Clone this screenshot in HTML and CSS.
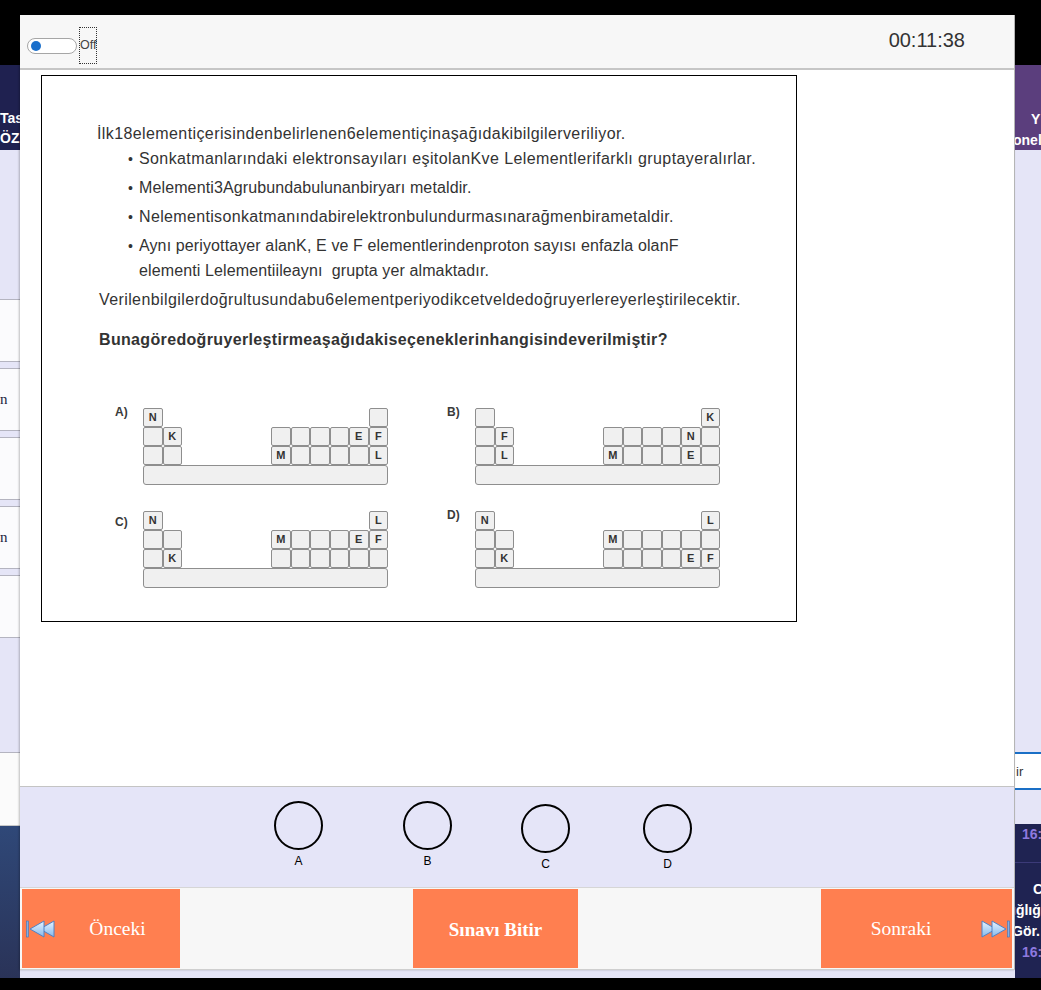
FILE: index.html
```html
<!DOCTYPE html>
<html lang="tr">
<head>
<meta charset="utf-8">
<title>Sınav</title>
<link rel="stylesheet" href="styles.css">
</head>
<body>
<div class="backdrop">
  <div class="topband"></div>
  <div class="under">
    <aside class="side-left">
      <div class="sl-head"><span>Tas</span><span>ÖZ</span></div>
      <div class="sl-lav"></div>
      <div class="sl-box"></div>
      <div class="sl-box"><span>n</span></div>
      <div class="sl-box"></div>
      <div class="sl-box"><span>n</span></div>
      <div class="sl-box"></div>
      <div class="sl-lav2"></div>
      <div class="sl-white"></div>
      <div class="sl-navy"></div>
    </aside>
    <div class="under-main"></div>
    <aside class="side-right">
      <div class="sr-head"><span class="sr-y">Y</span><span class="sr-onel">onel</span></div>
      <div class="sr-lav"></div>
      <div class="sr-input"><span>ir</span></div>
      <div class="sr-lav2"></div>
      <div class="sr-navy">
        <span class="sr-time">16:</span>
        <div class="sr-sep"></div>
        <span class="sr-c">C</span>
        <span class="sr-t">ığlığ</span>
        <span class="sr-t">Gör.</span>
        <span class="sr-time">16:</span>
      </div>
    </aside>
  </div>
  <div class="bottomband"></div>
</div>

<div class="modal">
  <header class="mhead">
    <div class="toggle-wrap">
      <span class="toggle"><span class="knob"></span></span>
      <span class="toggle-label">Off</span>
    </div>
    <div class="timer">00:11:38</div>
  </header>

  <main class="mbody">
    <section class="qbox">
      <p class="intro">İlk18elementiçerisindenbelirlenen6elementiçinaşağıdakibilgilerveriliyor.</p>
      <ul class="facts">
        <li>Sonkatmanlarındaki elektronsayıları eşitolanKve Lelementlerifarklı gruptayeralırlar.</li>
        <li class="tight">Melementi3Agrubundabulunanbiryarı metaldir.</li>
        <li class="mid">Nelementisonkatmanındabirelektronbulundurmasınarağmenbirametaldir.</li>
        <li class="tight">Aynı periyottayer alanK, E ve F elementlerindenproton sayısı enfazla olanF<br>elementi Lelementiileaynı&nbsp; grupta yer almaktadır.</li>
      </ul>
      <p class="given">Verilenbilgilerdoğrultusundabu6elementperiyodikcetveldedoğruyerlereyerleştirilecektir.</p>
      <p class="ask">Bunagöredoğruyerleştirmeaşağıdakiseçeneklerinhangisindeverilmiştir?</p>

      <div class="choices">
        <div class="choice">
          <span class="clabel">A)</span>
          <div class="ptable">
            <span class="cell">N</span><span class="void wide"></span><span class="cell"></span>
            <span class="cell"></span><span class="cell">K</span><span class="void"></span><span class="cell"></span><span class="cell"></span><span class="cell"></span><span class="cell"></span><span class="cell">E</span><span class="cell">F</span>
            <span class="cell"></span><span class="cell"></span><span class="void"></span><span class="cell">M</span><span class="cell"></span><span class="cell"></span><span class="cell"></span><span class="cell"></span><span class="cell">L</span>
            <span class="base"></span>
          </div>
        </div>
        <div class="choice">
          <span class="clabel">B)</span>
          <div class="ptable">
            <span class="cell"></span><span class="void wide"></span><span class="cell">K</span>
            <span class="cell"></span><span class="cell">F</span><span class="void"></span><span class="cell"></span><span class="cell"></span><span class="cell"></span><span class="cell"></span><span class="cell">N</span><span class="cell"></span>
            <span class="cell"></span><span class="cell">L</span><span class="void"></span><span class="cell">M</span><span class="cell"></span><span class="cell"></span><span class="cell"></span><span class="cell">E</span><span class="cell"></span>
            <span class="base"></span>
          </div>
        </div>
        <div class="choice">
          <span class="clabel low">C)</span>
          <div class="ptable">
            <span class="cell">N</span><span class="void wide"></span><span class="cell">L</span>
            <span class="cell"></span><span class="cell"></span><span class="void"></span><span class="cell">M</span><span class="cell"></span><span class="cell"></span><span class="cell"></span><span class="cell">E</span><span class="cell">F</span>
            <span class="cell"></span><span class="cell">K</span><span class="void"></span><span class="cell"></span><span class="cell"></span><span class="cell"></span><span class="cell"></span><span class="cell"></span><span class="cell"></span>
            <span class="base"></span>
          </div>
        </div>
        <div class="choice">
          <span class="clabel">D)</span>
          <div class="ptable">
            <span class="cell">N</span><span class="void wide"></span><span class="cell">L</span>
            <span class="cell"></span><span class="cell"></span><span class="void"></span><span class="cell">M</span><span class="cell"></span><span class="cell"></span><span class="cell"></span><span class="cell"></span><span class="cell"></span>
            <span class="cell"></span><span class="cell">K</span><span class="void"></span><span class="cell"></span><span class="cell"></span><span class="cell"></span><span class="cell"></span><span class="cell">E</span><span class="cell">F</span>
            <span class="base"></span>
          </div>
        </div>
      </div>
    </section>
  </main>

  <div class="answers">
    <div class="opt opt-a"><span class="circle"></span><span class="olabel">A</span></div>
    <div class="opt opt-b"><span class="circle"></span><span class="olabel">B</span></div>
    <div class="opt opt-c"><span class="circle"></span><span class="olabel">C</span></div>
    <div class="opt opt-d"><span class="circle"></span><span class="olabel">D</span></div>
  </div>

  <nav class="navbar">
    <button class="nbtn prev">
      <svg class="nicon" width="29" height="18" viewBox="0 0 29 18" aria-hidden="true">
        <defs>
          <linearGradient id="gp" x1="0" y1="0" x2="0" y2="1">
            <stop offset="0" stop-color="#e6f3ff"/>
            <stop offset="1" stop-color="#86b9ec"/>
          </linearGradient>
        </defs>
        <polygon points="14,9 28,1 28,17" fill="url(#gp)" stroke="#4f82c6" stroke-width="1"/>
        <polygon points="4,9 18,1 18,17" fill="url(#gp)" stroke="#4f82c6" stroke-width="1"/>
        <rect x="0.5" y="1" width="2" height="16" fill="#7fb0e6" stroke="#3f72b8" stroke-width="0.6"/>
      </svg>
      <span class="ntext">Önceki</span>
    </button>
    <span class="nspace"></span>
    <button class="nbtn finish"><span class="ntext">Sınavı Bitir</span></button>
    <span class="nspace"></span>
    <button class="nbtn next">
      <span class="ntext">Sonraki</span>
      <svg class="nicon" width="29" height="18" viewBox="0 0 29 18" aria-hidden="true">
        <defs>
          <linearGradient id="gn" x1="0" y1="0" x2="0" y2="1">
            <stop offset="0" stop-color="#e6f3ff"/>
            <stop offset="1" stop-color="#86b9ec"/>
          </linearGradient>
        </defs>
        <polygon points="15,9 1,1 1,17" fill="url(#gn)" stroke="#4f82c6" stroke-width="1"/>
        <polygon points="25,9 11,1 11,17" fill="url(#gn)" stroke="#4f82c6" stroke-width="1"/>
        <rect x="26.5" y="1" width="2" height="16" fill="#7fb0e6" stroke="#3f72b8" stroke-width="0.6"/>
      </svg>
    </button>
  </nav>
</div>
</body>
</html>
```

FILE: styles.css
```css
* { box-sizing: border-box; }
html, body { margin: 0; padding: 0; }
body {
  width: 1041px;
  height: 990px;
  overflow: hidden;
  position: relative;
  background: #000;
  font-family: "Liberation Sans", Arial, sans-serif;
}

/* ---------- underlying page ---------- */
.backdrop { display: flex; flex-direction: column; height: 990px; }
.topband { height: 65px; flex: none; background: #000; }
.under { display: flex; height: 913px; flex: none; }
.bottomband { flex: 1; background: #000; }
.under-main { flex: 1; background: #e5e5f7; }

.side-left { width: 20px; display: flex; flex-direction: column; overflow: hidden; background: #e5e5f7; }
.sl-head {
  height: 85px; flex: none; background: #1f2150;
  display: flex; flex-direction: column; padding-top: 43px;
  color: #fff; font-weight: bold; font-size: 14px; line-height: 20px; white-space: nowrap;
}
.sl-lav { height: 149px; flex: none; }
.sl-box {
  height: 63px; flex: none; margin-bottom: 6px;
  background: #fbfbfd; border-top: 1px solid #b4b4c0; border-bottom: 1px solid #b4b4c0;
  display: flex; align-items: center;
  font-family: "Liberation Serif", serif; font-size: 15px; color: #1c2440;
}
.sl-lav2 { height: 108px; flex: none; }
.sl-white { height: 74px; flex: none; background: #fbfbfb; border-top: 1px solid #b4b4c0; border-bottom: 1px solid #c8c8c8; }
.sl-navy { flex: 1; background: linear-gradient(#2f4878, #2a3358); }

.side-right { width: 26px; display: flex; flex-direction: column; overflow: hidden; background: #e5e5f7; }
.sr-head {
  height: 85px; flex: none; background: #5b3e7d;
  display: flex; flex-direction: column; padding-top: 44px;
  color: #fff; font-weight: bold; font-size: 14px; line-height: 21px; white-space: nowrap;
}
.sr-y { padding-left: 16px; }
.sr-onel { margin-left: -2px; }
.sr-lav { height: 602px; flex: none; }
.sr-input {
  height: 38px; flex: none; background: #fff;
  border-top: 2px solid #1a6fc6; border-bottom: 2px solid #1a6fc6;
  display: flex; align-items: center; font-size: 13px; color: #333; padding-left: 1px;
}
.sr-lav2 { height: 34px; flex: none; }
.sr-navy {
  flex: 1; background: #1f2352;
  display: flex; flex-direction: column;
  color: #fff; font-weight: bold; font-size: 14px; line-height: 21px; white-space: nowrap;
}
.sr-time { color: #8e79df; padding-left: 7px; }
.sr-sep { height: 1px; background: #3b3a78; margin: 17px 0 16px; }
.sr-c { padding-left: 18px; }
.sr-t { margin-left: -3px; }

/* ---------- modal ---------- */
.modal {
  position: absolute;
  left: 20px; top: 15px;
  width: 995px; height: 955px;
  display: flex; flex-direction: column;
  background: #fff;
  border-right: 1px solid #b5b5b5;
  border-bottom: 1px solid #cfcfcf;
  box-shadow: -1px 0 2px rgba(0, 0, 0, 0.25);
}

.mhead {
  height: 55px; flex: none;
  background: #f7f7f7;
  border-bottom: 2px solid #c6c6c6;
  display: flex; align-items: center; justify-content: space-between;
  padding: 0 49px 0 7px;
}
.toggle-wrap { display: flex; align-items: center; gap: 2px; margin-top: 8px; }
.toggle {
  width: 50px; height: 16px;
  border: 1px solid #a6a6a6; border-radius: 8px;
  background: #fff;
  display: flex; align-items: center; padding-left: 3px;
}
.knob { width: 10px; height: 10px; border-radius: 50%; background: #1a6fcb; }
.toggle-label {
  height: 37px; line-height: 35px;
  border: 1px dotted #333;
  padding: 0;
  font-size: 12.5px; color: #444;
}
.timer { font-size: 20px; color: #333; margin-top: -2px; }

.mbody { flex: 1; background: #fff; padding: 5px 0 0 21px; }

.qbox {
  width: 756px; height: 547px;
  border: 1px solid #000;
  padding: 45px 0 0 55px;
  color: #333;
  font-size: 16px;
  line-height: 25px;
  letter-spacing: 0.4px;
  white-space: nowrap;
}
.qbox p { margin: 0; }
.facts { list-style: none; margin: 0; padding: 0 0 0 42px; }
.facts li + li { margin-top: 4px; }
.facts li.tight { letter-spacing: 0.12px; }
.facts li.mid { letter-spacing: 0.34px; }
.facts li::before {
  content: "•";
  display: inline-block;
  width: 11px; margin-left: -11px;
  letter-spacing: 0;
  font-size: 14px;
  line-height: 1;
}
.given { margin-top: 4px !important; padding-left: 2px; }
.ask { margin-top: 15px !important; padding-left: 2px; font-weight: bold; letter-spacing: 0.34px; }

.choices {
  margin: 53px 0 0 18px;
  display: grid;
  grid-template-columns: 332px 332px;
  row-gap: 23px;
  letter-spacing: 0;
}
.choice { display: flex; align-items: flex-start; }
.clabel { width: 28px; flex: none; font-size: 12px; line-height: 14px; font-weight: bold; color: #3a3a3a; }
.clabel.low { padding-top: 7px; }
.ptable {
  margin-top: 3px;
  width: 245px;
  display: grid;
  grid-template-columns: 19.5px 19.5px 1fr repeat(6, 19.5px);
  grid-template-rows: 19px 19px 19px 20px;
}
.cell {
  border: 1px solid #8e8e8e;
  border-radius: 2px;
  background: #f0f0f0;
  display: flex; align-items: center; justify-content: center;
  font-size: 11px; line-height: 1; font-weight: bold; color: #333;
}
.void.wide { grid-column: span 7; }
.base {
  grid-column: 1 / -1;
  border: 1px solid #8e8e8e;
  border-radius: 3px;
  background: #f0f0f0;
}

/* ---------- answer circles ---------- */
.answers {
  height: 101px; flex: none;
  background: #e5e5f8;
  border-top: 1px solid #c4c4c4;
  display: flex; align-items: flex-start;
  padding: 14px 0 0 254px;
}
.opt { display: flex; flex-direction: column; align-items: center; width: 49px; }
.opt-b { margin-left: 80px; }
.opt-c { margin-left: 69px; margin-top: 3px; }
.opt-d { margin-left: 73px; margin-top: 3px; }
.circle { width: 49px; height: 49px; border: 2.5px solid #000; border-radius: 50%; }
.olabel { margin-top: 5px; font-size: 12px; line-height: 13px; color: #000; }

/* ---------- navigation ---------- */
.navbar {
  height: 82px; flex: none;
  background: #f7f7f7;
  border-top: 1px solid #d6d6d6;
  padding: 1px 2px;
  display: grid;
  grid-template-columns: 158px 233px 165px 1fr 191px;
}
.nbtn {
  height: 79px;
  margin: 0; border: 0; padding: 0;
  background: #ff7f50;
  color: #fff;
  font-family: "Liberation Serif", "Times New Roman", serif;
  font-size: 19.5px;
  display: flex; align-items: center;
}
.nbtn.prev { padding-left: 4px; }
.nbtn.next { padding-right: 2px; }
.ntext { flex: 1; text-align: center; }
.nicon { flex: none; }
.finish .ntext { font-weight: bold; margin-top: 2px; font-size: 19px; }
```
